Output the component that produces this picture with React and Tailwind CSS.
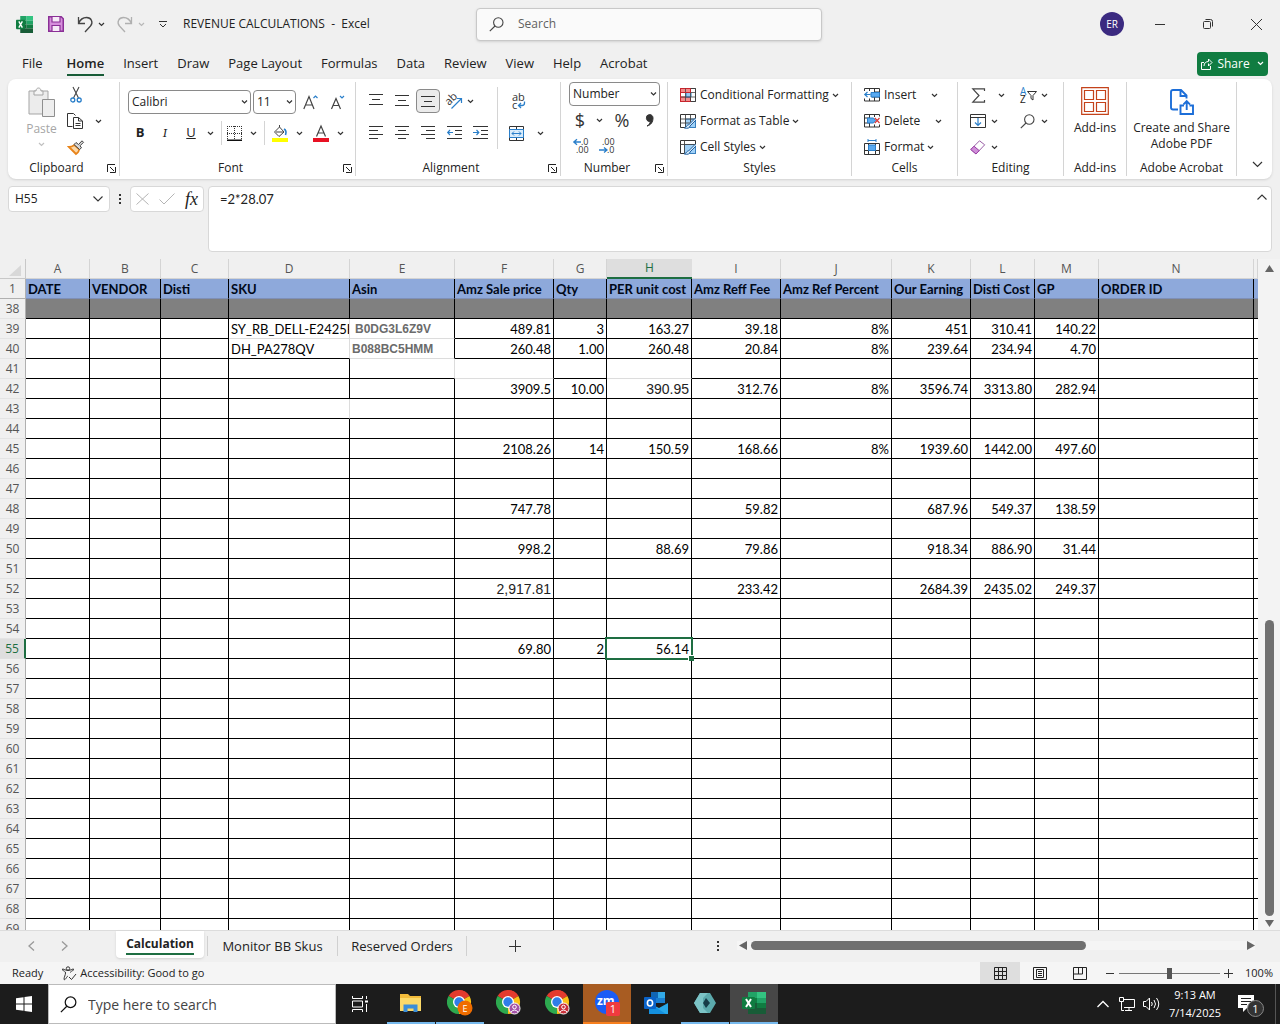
import { useState } from 'react';

const columns = [
  { id: 'A', width: 'w-[64px]', title: 'DATE' },
  { id: 'B', width: 'w-[71px]', title: 'VENDOR' },
  { id: 'C', width: 'w-[68px]', title: 'Disti' },
  { id: 'D', width: 'w-[121px]', title: 'SKU' },
  { id: 'E', width: 'w-[105px]', title: 'Asin' },
  { id: 'F', width: 'w-[99px]', title: 'Amz Sale price' },
  { id: 'G', width: 'w-[53px]', title: 'Qty' },
  { id: 'H', width: 'w-[85px]', title: 'PER unit cost' },
  { id: 'I', width: 'w-[89px]', title: 'Amz Reff Fee' },
  { id: 'J', width: 'w-[111px]', title: 'Amz Ref Percent' },
  { id: 'K', width: 'w-[79px]', title: 'Our Earning' },
  { id: 'L', width: 'w-[64px]', title: 'Disti Cost' },
  { id: 'M', width: 'w-[64px]', title: 'GP' },
  { id: 'N', width: 'w-[155px]', title: 'ORDER ID' },
  { id: '', width: '', title: '' },
];

const cells = {
  39: { D: 'SY_RB_DELL-E2425H', E: 'B0DG3L6Z9V', F: '489.81', G: '3', H: '163.27', I: '39.18', J: '8%', K: '451', L: '310.41', M: '140.22' },
  40: { D: 'DH_PA278QV', E: 'B088BC5HMM', F: '260.48', G: '1.00', H: '260.48', I: '20.84', J: '8%', K: '239.64', L: '234.94', M: '4.70' },
  42: { F: '3909.5', G: '10.00', H: '390.95', I: '312.76', J: '8%', K: '3596.74', L: '3313.80', M: '282.94' },
  45: { F: '2108.26', G: '14', H: '150.59', I: '168.66', J: '8%', K: '1939.60', L: '1442.00', M: '497.60' },
  48: { F: '747.78', I: '59.82', K: '687.96', L: '549.37', M: '138.59' },
  50: { F: '998.2', H: '88.69', I: '79.86', K: '918.34', L: '886.90', M: '31.44' },
  52: { F: '2,917.81', I: '233.42', K: '2684.39', L: '2435.02', M: '249.37' },
  55: { F: '69.80', G: '2', H: '56.14' },
};

// cells that came without borders show the plain gridline instead
const lightBottom = ['D39', 'E39', 'E40', 'F41', 'H41'];
const lightRight = ['D39', 'D40', 'D43', 'E41'];

const cellFonts = {
  E39: 'font-["Liberation_Sans"] text-[12px] font-bold text-[#6b6b6b] pl-[5px]',
  E40: 'font-["Liberation_Sans"] text-[12px] font-bold text-[#6b6b6b]',
  H42: 'font-["Liberation_Sans"] text-[14px] text-[#222]',
  F52: 'font-["Liberation_Sans"] text-[14px] text-[#222]',
};

const rowNumbers = Array.from({ length: 32 }, (_, i) => 38 + i);

const Svg = ({ w, h, children, className = '' }) => (
  <svg width={w} height={h} viewBox={`0 0 ${w} ${h}`} fill="none" stroke="#333" className={`shrink-0 overflow-visible ${className}`} aria-hidden="true">
    {children}
  </svg>
);

const Chevron = ({ color = '#333', className = '' }) => (
  <Svg w={7} h={5} className={className}>
    <path d="M1 1l2.5 2.5L6 1" stroke={color} strokeWidth="1.2" />
  </Svg>
);

const IconButton = ({ label, children, className = '' }) => (
  <button type="button" aria-label={label} className={`flex items-center justify-center ${className}`}>
    {children}
  </button>
);

const Launcher = ({ label }) => (
  <IconButton label={label} className="absolute right-[3px] bottom-[3px]">
    <Svg w={9} h={9}>
      <path d="M.5 8V.5H8M3 3l4 4M8.500 3v5.500H3" stroke="#222" />
    </Svg>
  </IconButton>
);

const Group = ({ title, className, body = '', launcher, children }) => (
  <section aria-label={title} className={`relative flex shrink-0 flex-col border-r border-[#d4d4d4] ${className}`}>
    <div className={`h-[76px] shrink-0 ${body}`}>{children}</div>
    <div className={`text-center leading-[20px] ${launcher ? 'pr-[14px]' : ''}`}>{title}</div>
    {launcher && <Launcher label={`${title} settings`} />}
  </section>
);

/* ---------- small drawings ---------- */

const ExcelLogo = ({ big }) => (
  <svg width={big ? 24 : 17} height={big ? 22 : 17} viewBox="0 0 24 22" preserveAspectRatio="none" className="shrink-0" aria-hidden="true">
    <rect x="6" y="0" width="9" height="6" fill="#21a366" />
    <rect x="15" y="0" width="9" height="6" fill="#33c481" />
    <rect x="6" y="6" width="9" height="5" fill="#107c41" />
    <rect x="15" y="6" width="9" height="5" fill="#21a366" />
    <rect x="6" y="11" width="9" height="5" fill="#185c37" />
    <rect x="15" y="11" width="9" height="5" fill="#107c41" />
    <rect x="6" y="16" width="18" height="6" fill="#185c37" />
    <rect x="0" y="5" width="13" height="12" rx="1" fill="#107c41" />
    <path d="M4 7l5 8M9 7l-5 8" stroke="#fff" strokeWidth="2" />
  </svg>
);

const SaveIcon = () => (
  <Svg w={16} h={16}>
    <path d="M.75.75h12.500l2 2v12.500H.75z" fill="#d68fdc" stroke="#8a2f96" strokeWidth="1.500" />
    <path d="M4 1v5h8V1M4 15V9.500h8V15" fill="#f7eaf8" stroke="#8a2f96" strokeWidth="1.200" />
  </Svg>
);

const UndoIcon = ({ color = '#444', flip }) => (
  <Svg w={16} h={17} className={flip ? '-scale-x-100' : ''}>
    <path d="M1.500 1v6.500H8M1.500 7.500C3 4 6 1.500 9.500 1.500c5 0 7 5 4 8.500L8 16" stroke={color} strokeWidth="1.300" />
  </Svg>
);

const SearchIcon = ({ size = 15, color = '#444' }) => (
  <svg width={size} height={size} viewBox="0 0 15 15" fill="none" stroke={color} strokeWidth="1.100" className="shrink-0" aria-hidden="true">
    <circle cx="9.300" cy="5.500" r="4.700" />
    <path d="M6 9L.8 14.200" />
  </svg>
);

const PasteIcon = () => (
  <Svg w={28} h={30}>
    <path d="M1 4h19v23H1z" fill="#ececec" stroke="#a5a5a5" />
    <path d="M6 4h2c0-4 5-4 5 0h2v4H6z" fill="#f5f5f5" stroke="#a5a5a5" />
    <path d="M14.500 12.500h12v17h-12z" fill="#eee" stroke="#8f8f8f" />
  </Svg>
);

const CutIcon = () => (
  <Svg w={12} h={16}>
    <path d="M3 0l5.500 11M9 0L3.500 11" stroke="#444" strokeWidth="1.100" />
    <circle cx="2.800" cy="13" r="2" stroke="#2a7fca" strokeWidth="1.300" />
    <circle cx="9.200" cy="13" r="2" stroke="#2a7fca" strokeWidth="1.300" />
  </Svg>
);

const CopyIcon = () => (
  <Svg w={16} h={16}>
    <path d="M5.500 13.500h-5V.5h6l2 2" />
    <path d="M6.500 4.500h5l4 3.500v7.500h-9zM11.500 4.500V8h4M8.500 10.500h5M8.500 12.500h5" fill="#fff" />
  </Svg>
);

const PainterIcon = () => (
  <Svg w={16} h={15}>
    <path d="M1 7l7 7c3-2 3-3 3-5L6.500 5C5 6 3 7 1 7z" fill="#fbd8a8" stroke="#e8841a" strokeWidth="1.800" />
    <path d="M6 4.500l2-2 2.500 2L14 .8l1.500 1.500-3.500 3.500 1.500 2-2 1.700z" fill="#d8d8d8" stroke="#444" />
  </Svg>
);

const FontSizeIcon = ({ down }) => (
  <Svg w={15} h={15}>
    {down ? (
      <path d="M1.500 14L6 3.500 10.500 14M3 10.500h6" stroke="#444" strokeWidth="1.200" />
    ) : (
      <path d="M.8 14L6 1.500 11 14M2.500 10h7" stroke="#444" strokeWidth="1.200" />
    )}
    <path d={down ? 'M10 1l2 2 2-2' : 'M10.500 3l2-2 2 2'} stroke="#2a7fca" strokeWidth="1.200" />
  </Svg>
);

const BordersIcon = () => (
  <Svg w={15} h={15}>
    <path d="M.5 0v14M7.500 0v14M14.500 0v14M0 .5h15M0 7.500h15" stroke="#333" strokeDasharray="1 1" />
    <path d="M0 14.200h15" stroke="#111" strokeWidth="1.500" />
  </Svg>
);

const FillIcon = () => (
  <Svg w={16} h={17}>
    <path d="M2.500 7L7.500 2l4.500 5-5 4.500zM7.500 2V0M4 7h8" stroke="#444" />
    <path d="M12 4c2 1 2.500 3 1.500 6" stroke="#2a7fca" strokeWidth="1.600" />
    <path d="M0 15h16" stroke="#ffff00" strokeWidth="4" />
  </Svg>
);

const FontColorIcon = () => (
  <Svg w={16} h={17}>
    <path d="M3.500 11.500L8 1l4.500 10.500M5 8h6" stroke="#444" strokeWidth="1.200" />
    <path d="M0 15h16" stroke="#e81123" strokeWidth="4" />
  </Svg>
);

const alignPaths = {
  top: 'M0 .5h14M3 5.500h8M0 10.500h14',
  middle: 'M0 1.500h14M3 6.500h8M0 11.500h14',
  bottom: 'M0 2.500h14M3 7.500h8M0 12.500h14',
  left: 'M0 .5h14M0 4.500h9M0 8.500h14M0 12.500h9',
  center: 'M0 .5h14M3 4.500h8M0 8.500h14M3 12.500h8',
  right: 'M0 .5h14M5 4.500h9M0 8.500h14M5 12.500h9',
};

const AlignIcon = ({ kind }) => (
  <Svg w={14} h={14}>
    <path d={alignPaths[kind]} />
  </Svg>
);

const IndentIcon = ({ inward }) => (
  <Svg w={15} h={14}>
    <path d="M0 .5h15M8 4.500h7M8 8.500h7M0 12.500h15" />
    <path d={inward ? 'M0 6.500h5.500M3.500 4l2.300 2.500L3.500 9' : 'M6 6.500H.7M3 4L.7 6.500 3 9'} stroke="#2a7fca" strokeWidth="1.200" />
  </Svg>
);

const OrientationIcon = () => (
  <Svg w={17} h={15}>
    <text x="0" y="9" transform="rotate(-45 5 7)" fontSize="11" fill="#333" stroke="none">ab</text>
    <path d="M5.500 14.500L15.500 4.500M11 4.500h4.500V9" stroke="#2a7fca" strokeWidth="1.200" />
  </Svg>
);

const WrapIcon = () => (
  <Svg w={15} h={17}>
    <text x="1" y="8" fontSize="11" fill="#333" stroke="none">ab</text>
    <text x="1" y="16" fontSize="11" fill="#333" stroke="none">c</text>
    <path d="M13.500 8.500v1.500q0 2.500-2.500 2.500H7.500M10 10l-2.500 2.500L10 15" stroke="#2a7fca" strokeWidth="1.300" />
  </Svg>
);

const MergeIcon = () => (
  <Svg w={15} h={15}>
    <path d="M.5.5h14v14H.5zM.5 3.500h14M.5 11.500h14M7.500.5v3M7.500 11.500v3" />
    <path d="M.5 3.500h14v8H.5z" fill="#d9ecfb" stroke="#2a7fca" />
    <path d="M3 7.500h9M5 5.500l-2 2 2 2M10 5.500l2 2-2 2" stroke="#2a7fca" />
  </Svg>
);

const DecimalIcon = ({ less }) => (
  <Svg w={17} h={16}>
    <g stroke="none" fill="#333" fontSize="9">
      <text x={less ? 3 : 8} y="7">{less ? '.00' : '.0'}</text>
      <text x={less ? 8 : 3} y="15">{less ? '.0' : '.00'}</text>
    </g>
    <path d={less ? 'M0 12h8M5 9.500L8 12l-3 2.500' : 'M8 4H.8M4 1.200L.8 4 4 6.800'} stroke="#2a7fca" strokeWidth="1.300" />
  </Svg>
);

const ConditionalIcon = () => (
  <Svg w={16} h={15}>
    <path d="M.5.5h15v13H.5z" fill="#fff" />
    <path d="M.5.5h10v4H.5zM.5 9h10v4.500H.5z" fill="#f58b8b" stroke="#c8242c" />
    <path d="M6 4.500h5V9H6z" fill="#9cc8f0" stroke="#2a7fca" />
    <path d="M5.500.5v13M10.500.5v13M15.500.5v13M.5 4.500h15M.5 9h15M10.500.5h5M10.500 13.500h5" stroke="#444" strokeWidth=".8" />
    <path d="M.5.5v13h10M10.500.5v4H.5" stroke="#c8242c" />
  </Svg>
);

const TableStyleIcon = ({ solid }) => (
  <Svg w={16} h={15}>
    <path d="M.5.5h15v13H.5z" fill="#fff" />
    <path d={solid ? 'M4.500 4.500h11v9h-11z' : 'M5.500 5h10v8.500h-10z'} fill="#9fd0f7" stroke="#2a7fca" strokeWidth=".8" />
    <path d={solid ? 'M.5 4.500h15M4.500.5v13' : 'M.5 5h15M.5 9h10M5.500.5v13M10.500.5v8'} stroke="#444" strokeWidth=".9" />
    <path d="M15.500 4L8.500 11c-2 0-2 2-4 3 3 .8 5.500 0 5.500-2l6-6" fill="#d9ecfb" stroke="#1f5f9e" />
  </Svg>
);

const CellsIcon = ({ kind }) => (
  <Svg w={16} h={16}>
    {kind === 'insert' && (
      <>
        <path d="M.5 4V1.500h15v12.500H.5v-2.500M5.500 1.500V4M10.500 1.500v12.500M5.500 11.500V14M11 5h4.500M8 10h7.500" />
        <path d="M7 5.500h8.500v4.500H7z" fill="#5aaaf0" stroke="#2a7fca" />
        <path d="M6.500 7.500H.8M3.500 5L.8 7.500 3.500 10" stroke="#2a7fca" strokeWidth="1.200" />
      </>
    )}
    {kind === 'delete' && (
      <>
        <path d="M15.500 3.500v-2H.5V14h15v-2.500M5.500 1.500v12.500M10.500 1.500V4M10.500 11.500V14M.5 5h5M.5 10h5" />
        <path d="M3.500 5h6l2 2.500-2 2.500h-6z" fill="#5aaaf0" stroke="#2a7fca" />
        <path d="M10.800 5l4.700 5M15.500 5l-4.700 5" stroke="#d8383a" strokeWidth="1.200" />
      </>
    )}
    {kind === 'format' && (
      <>
        <path d="M.5 4.500h15v11H.5zM4.500 4.500v11M11.500 4.500v11M.5 11.500h15" />
        <path d="M4.500 6h7v5.500h-7z" fill="#5aaaf0" stroke="#2a7fca" />
        <path d="M4 1.500h8M4 0v3M12 0v3" stroke="#2a7fca" />
      </>
    )}
  </Svg>
);

const SumIcon = () => (
  <Svg w={13} h={15}>
    <path d="M12.500 3V.8H.8L7 7.500.8 14.200h11.700V12" stroke="#444" strokeWidth="1.200" />
  </Svg>
);

const SortIcon = () => (
  <Svg w={17} h={17}>
    <text x="0" y="8" fontSize="10" fill="#2a7fca" stroke="none">A</text>
    <text x="0" y="16" fontSize="10" fill="#222" stroke="none">Z</text>
    <path d="M7.500 4.500h9l-3.500 4v4.500l-2-1.500v-3z" stroke="#333" />
  </Svg>
);

const FillDownIcon = () => (
  <Svg w={16} h={14}>
    <path d="M.5.5h15v13H.5zM.5 3.500h15" />
    <path d="M8 4v7.500M5 8.500l3 3 3-3" stroke="#2a7fca" strokeWidth="1.200" />
  </Svg>
);

const EraserIcon = () => (
  <Svg w={16} h={15}>
    <path d="M.8 9.500L9.500.8l5.200 4L6 14z" fill="#fff" stroke="#9a5fa6" />
    <path d="M.8 9.500L4 6.200l5.200 4.400L6 14z" fill="#cf8fd8" stroke="#9a3fa6" />
  </Svg>
);

const AddInsIcon = () => (
  <Svg w={28} h={28}>
    <path d="M.7.7h26.600v26.600H.7zM3.500 3.500h9v9h-9zM15.500 3.500h9v9h-9zM3.500 15.500h9v9h-9zM15.500 15.500h9v9h-9z" stroke="#c4421a" strokeWidth="1.200" />
  </Svg>
);

const PdfIcon = () => (
  <Svg w={24} h={26}>
    <path d="M8 20.500H3q-2 0-2-2V3q0-2 2-2h8l5.500 5.500v3M10.500 1v6h6M14 16.500h-3.500V25h12.500v-8.500h-3.500M16.700 21v-8.500M13.500 15.300l3.200-3.200 3.200 3.200" stroke="#1c6ed8" strokeWidth="1.900" />
  </Svg>
);

/* ---------- title bar + tabs ---------- */

const TitleBar = () => (
  <header className="flex h-[48px] shrink-0 items-center">
    <div className="flex min-w-0 flex-1 items-center pl-4">
      <ExcelLogo />
      <IconButton label="Save" className="ml-[15px]"><SaveIcon /></IconButton>
      <IconButton label="Undo" className="ml-[13px] gap-[5px]"><UndoIcon /><Chevron /></IconButton>
      <IconButton label="Redo" className="ml-[12px] gap-[5px]"><UndoIcon color="#b0b0b0" flip /><Chevron color="#b8b8b8" /></IconButton>
      <IconButton label="Customize Quick Access Toolbar" className="ml-[14px]">
        <Svg w={8} h={7}><path d="M0 .5h8M1 3l3 3 3-3" /></Svg>
      </IconButton>
      <h1 className="ml-4 whitespace-pre">REVENUE CALCULATIONS  -  Excel</h1>
    </div>
    <label className="ml-[18px] flex h-[33px] w-[346px] items-center gap-[14px] rounded border border-[#c8c8c8] bg-[#fafafa] px-3 shadow-sm">
      <SearchIcon />
      <input type="search" aria-label="Search" placeholder="Search" className="min-w-0 flex-1 bg-transparent outline-none placeholder:text-[#616161]" />
    </label>
    <div className="flex h-full flex-1 items-center justify-end pl-4">
      <IconButton label="Account ER" className="mr-3 h-[24px] w-[24px] rounded-full bg-[#3b2a80] text-[10px] text-white">ER</IconButton>
      <IconButton label="Minimize" className="h-full w-[48px]">
        <Svg w={10} h={10}><path d="M0 5.500h10" /></Svg>
      </IconButton>
      <IconButton label="Restore" className="h-full w-[48px]">
        <Svg w={10} h={10}>
          <rect x=".5" y="2.500" width="7" height="7" rx="1" />
          <path d="M2.500.5h5q2 0 2 2v5" />
        </Svg>
      </IconButton>
      <IconButton label="Close" className="h-full w-[48px]">
        <Svg w={11} h={11}><path d="M0 0l11 11M11 0L0 11" /></Svg>
      </IconButton>
    </div>
  </header>
);

const ribbonTabs = ['File', 'Home', 'Insert', 'Draw', 'Page Layout', 'Formulas', 'Data', 'Review', 'View', 'Help', 'Acrobat'];

const RibbonTabs = () => (
  <nav className="flex h-[31px] shrink-0 items-center justify-between pr-3 pl-[22px]">
    <div className="flex h-full gap-[19px] text-[13px]">
      {ribbonTabs.map((tab) => (
        <button
          key={tab}
          type="button"
          className={tab === 'Home' ? 'h-[28px] border-b-2 border-[#185c37] pt-[5px] font-semibold' : 'h-[28px] pt-[3px] first:mr-[5px]'}
        >
          {tab}
        </button>
      ))}
    </div>
    <button type="button" className="flex h-[24px] w-[71px] items-center justify-center gap-1 rounded bg-[#107c41] text-white">
      <Svg w={12} h={12}>
        <path d="M3 4.500H.5v7h9V8M3 8c0-3 2-4.500 4.500-4.500V1L11 4.500 7.500 8V5.500" stroke="#fff" />
      </Svg>
      Share
      <Chevron color="#fff" className="ml-[3px]" />
    </button>
  </nav>
);

/* ---------- ribbon ---------- */

const Picker = ({ label, value, className }) => (
  <div className={`relative shrink-0 ${className}`}>
    <select aria-label={label} defaultValue={value} className="h-full w-full appearance-none rounded border border-[#8a8a8a] bg-white pl-[3px]">
      <option>{value}</option>
    </select>
    <Chevron className="pointer-events-none absolute top-1/2 right-[3px] -translate-y-1/2" />
  </div>
);

const MenuRow = ({ icon, label, spread }) => (
  <button type="button" className="flex h-[26px] items-center">
    {icon}
    <span className="ml-1">{label}</span>
    <Chevron className={spread ? 'ml-[15px]' : 'ml-[3px]'} />
  </button>
);

const ClipboardGroup = () => (
  <Group title="Clipboard" className="w-[112px]" launcher>
    <div className="flex">
      <button type="button" className="flex w-[59px] flex-col items-center pt-[5px] pl-[8px] text-[#a6a6a6]">
        <PasteIcon />
        <span className="mt-[3px]">Paste</span>
        <Chevron color="#c0c0c0" className="mt-1" />
      </button>
      <div className="flex flex-col">
        <IconButton label="Cut" className="h-[26px] w-[18px]"><CutIcon /></IconButton>
        <IconButton label="Copy" className="h-[26px] gap-3"><CopyIcon /><Chevron /></IconButton>
        <IconButton label="Format Painter" className="h-[26px] w-[18px]"><PainterIcon /></IconButton>
      </div>
    </div>
  </Group>
);

const FontGroup = () => (
  <Group title="Font" className="w-[236px]" body="pl-2" launcher>
    <div className="flex items-center pt-2">
      <Picker label="Font" value="Calibri" className="h-[24px] w-[123px]" />
      <Picker label="Font size" value="11" className="ml-[2px] h-[24px] w-[43px]" />
      <IconButton label="Increase font size" className="ml-[7px]"><FontSizeIcon /></IconButton>
      <IconButton label="Decrease font size" className="ml-3"><FontSizeIcon down /></IconButton>
    </div>
    <div className="mt-[7px] flex h-[24px] items-center text-[13px]">
      <button type="button" className="w-[24px] font-bold">B</button>
      <button type="button" className="w-[26px] font-serif italic">I</button>
      <button type="button" className="w-[26px] underline">U</button>
      <IconButton label="Underline styles" className="w-[12px]"><Chevron /></IconButton>
      <span className="mx-[5px] h-[24px] w-px bg-[#d4d4d4]" />
      <IconButton label="Borders" className="gap-2"><BordersIcon /><Chevron /></IconButton>
      <span className="mx-[7px] h-[24px] w-px bg-[#d4d4d4]" />
      <IconButton label="Fill color" className="gap-2"><FillIcon /><Chevron /></IconButton>
      <IconButton label="Font color" className="ml-[10px] gap-2"><FontColorIcon /><Chevron /></IconButton>
    </div>
  </Group>
);

const AlignmentGroup = () => (
  <Group title="Alignment" className="w-[205px]" launcher>
    <div className="flex pt-[5px]">
      <div className="ml-[7px] grid shrink-0 grid-cols-[repeat(4,26px)_30px]">
        <IconButton label="Top align" className="h-[28px]"><AlignIcon kind="top" /></IconButton>
        <IconButton label="Middle align" className="h-[28px]"><AlignIcon kind="middle" /></IconButton>
        <IconButton label="Bottom align" className="h-[24px] w-[24px] self-center justify-self-center rounded border border-[#8a8a8a] bg-[#ebebeb]"><AlignIcon kind="bottom" /></IconButton>
        <IconButton label="Orientation" className="col-span-2 h-[28px] justify-start gap-1 pl-[5px]"><OrientationIcon /><Chevron /></IconButton>
        <IconButton label="Align left" className="h-[36px]"><AlignIcon kind="left" /></IconButton>
        <IconButton label="Center" className="h-[36px]"><AlignIcon kind="center" /></IconButton>
        <IconButton label="Align right" className="h-[36px]"><AlignIcon kind="right" /></IconButton>
        <IconButton label="Decrease indent" className="h-[36px]"><IndentIcon /></IconButton>
        <IconButton label="Increase indent" className="h-[36px] w-[26px]"><IndentIcon inward /></IconButton>
      </div>
      <span className="h-[62px] w-px bg-[#d4d4d4]" />
      <div className="ml-[11px] flex flex-col">
        <IconButton label="Wrap text" className="h-[28px] w-[18px]"><WrapIcon /></IconButton>
        <IconButton label="Merge and center" className="h-[36px] gap-[13px]"><MergeIcon /><Chevron /></IconButton>
      </div>
    </div>
  </Group>
);

const NumberGroup = () => (
  <Group title="Number" className="w-[107px]" body="pl-2" launcher>
    <Picker label="Number format" value="Number" className="h-[24px] w-[91px]" />
    <div className="flex h-[28px] items-center text-[18px] text-[#333]">
      <IconButton label="Accounting format" className="w-[22px]">$</IconButton>
      <Chevron className="mx-[5px]" />
      <button type="button" aria-label="Percent style" className="w-[28px] text-center">%</button>
      <IconButton label="Comma style" className="w-[26px]">
        <Svg w={9} h={13}>
          <path d="M4.500.5a3.500 3.500 0 1 0 .8 7C5 9.500 4 11 2 12c4-1 6-4 6-8 0-2-1.500-3.500-3.500-3.500z" fill="#333" />
        </Svg>
      </IconButton>
    </div>
    <div className="flex h-[24px] items-center gap-[9px] pl-1">
      <IconButton label="Increase decimal"><DecimalIcon /></IconButton>
      <IconButton label="Decrease decimal"><DecimalIcon less /></IconButton>
    </div>
  </Group>
);

const Ribbon = () => (
  <div className="mx-2 flex h-[100px] shrink-0 overflow-hidden rounded-lg bg-white py-[3px] shadow">
    <ClipboardGroup />
    <FontGroup />
    <AlignmentGroup />
    <NumberGroup />
    <Group title="Styles" className="w-[184px]" body="pl-3">
      <MenuRow icon={<ConditionalIcon />} label="Conditional Formatting" />
      <MenuRow icon={<TableStyleIcon />} label="Format as Table" />
      <MenuRow icon={<TableStyleIcon solid />} label="Cell Styles" />
    </Group>
    <Group title="Cells" className="w-[106px]" body="pl-3">
      <MenuRow icon={<CellsIcon kind="insert" />} label="Insert" spread />
      <MenuRow icon={<CellsIcon kind="delete" />} label="Delete" spread />
      <MenuRow icon={<CellsIcon kind="format" />} label="Format" />
    </Group>
    <Group title="Editing" className="w-[106px]" body="pl-3">
      <div className="grid grid-cols-[50px_40px]">
        <IconButton label="AutoSum" className="h-[26px] justify-start gap-[13px] pl-[2px]"><SumIcon /><Chevron /></IconButton>
        <IconButton label="Sort and filter" className="h-[26px] justify-start gap-1"><SortIcon /><Chevron /></IconButton>
        <IconButton label="Fill" className="h-[26px] justify-start gap-[5px]"><FillDownIcon /><Chevron /></IconButton>
        <IconButton label="Find and select" className="h-[26px] justify-start gap-[6px]"><SearchIcon /><Chevron /></IconButton>
        <IconButton label="Clear" className="h-[26px] justify-start gap-[5px]"><EraserIcon /><Chevron /></IconButton>
      </div>
    </Group>
    <Group title="Add-ins" className="w-[63px]">
      <button type="button" className="flex w-full flex-col items-center gap-[5px] pt-[5px] leading-4">
        <AddInsIcon />
        Add-ins
      </button>
    </Group>
    <Group title="Adobe Acrobat" className="w-[110px]">
      <button type="button" className="flex w-full flex-col items-center gap-[5px] pt-[7px] leading-4">
        <PdfIcon />
        <span className="whitespace-nowrap">Create and Share<br />Adobe PDF</span>
      </button>
    </Group>
    <div className="flex flex-1 items-end justify-end pr-[9px] pb-[8px]">
      <IconButton label="Collapse ribbon">
        <Svg w={11} h={7}><path d="M1 1l4.500 4.500L10 1" strokeWidth="1.200" /></Svg>
      </IconButton>
    </div>
  </div>
);

const FormulaBar = () => {
  const [formula, setFormula] = useState('=2*28.07');

  return (
    <div className="mt-[7px] flex shrink-0 items-start px-2">
      <div className="flex h-[26px] w-[102px] items-center rounded border border-[#d8d8d8] bg-white px-[6px]">
        <input aria-label="Name box" defaultValue="H55" className="w-0 min-w-0 flex-1 bg-transparent outline-none" />
        <Svg w={10} h={6}><path d="M.5.500L5 5 9.500.500" strokeWidth="1.100" /></Svg>
      </div>
      <Svg w={20} h={26}>
        <path d="M9 8h2v2H9zM9 12h2v2H9zM9 16h2v2H9z" fill="#333" stroke="none" />
      </Svg>
      <div className="flex h-[26px] w-[74px] items-center justify-between rounded border border-[#d8d8d8] bg-white px-[5px]">
        <IconButton label="Cancel"><Svg w={13} h={12}><path d="M.5.5l12 11M12.500.5L.5 11.500" stroke="#b5b5b5" /></Svg></IconButton>
        <IconButton label="Enter"><Svg w={16} h={12}><path d="M.5 6.500l4.500 4.500L15.500.5" stroke="#b5b5b5" /></Svg></IconButton>
        <button type="button" aria-label="Insert function" className='font-["Liberation_Serif"] text-[18px] leading-none italic'>fx</button>
      </div>
      <div className="ml-1 flex h-[66px] flex-1 items-start rounded border border-[#d8d8d8] bg-white pt-[3px] pr-1 pl-[11px]">
        <textarea
          aria-label="Formula"
          value={formula}
          onChange={(e) => setFormula(e.target.value)}
          className='h-[56px] flex-1 resize-none bg-transparent font-[Lato] text-[13px] leading-[18px] outline-none'
        />
        <IconButton label="Collapse formula bar" className="pt-1">
          <Svg w={10} h={6}><path d="M.5 5.500L5 1l4.500 4.500" strokeWidth="1.100" /></Svg>
        </IconButton>
      </div>
    </div>
  );
};

/* ---------- sheet ---------- */

const SheetCell = ({ row, col }) => {
  const ref = `${col}${row}`;
  const value = cells[row]?.[col];
  const selected = ref === 'H55';
  const bottom = lightBottom.includes(ref) ? 'border-b-[#dcdcdc]' : 'border-b-black';
  const right = lightRight.includes(ref) ? 'border-r-[#dcdcdc]' : 'border-r-black';
  const align = col === 'D' || col === 'E' ? 'text-left' : 'text-right';

  return (
    <td className={`h-[20px] border-r border-b px-[2px] last:border-r-0 ${bottom} ${right} ${align} ${row === 38 ? 'bg-[#808080]' : 'bg-white'} ${selected ? 'relative' : 'overflow-hidden'} ${cellFonts[ref] || ''}`}>
      {value}
      {selected && (
        <span className="absolute -inset-[2px] border-2 border-[#1e6e42]">
          <span className="absolute -right-[3px] -bottom-[3px] h-[6px] w-[6px] border-t border-l border-white bg-[#1e6e42]" />
        </span>
      )}
    </td>
  );
};

const Sheet = () => (
  <main className="mt-[7px] flex min-h-0 flex-1">
    <div className="min-w-0 flex-1 overflow-hidden">
      <table className='w-full table-fixed border-separate border-spacing-0 font-[Lato] text-[13px] leading-[18px] whitespace-nowrap text-black'>
        <thead>
          <tr className='font-["Open_Sans"] text-[12px] text-[#555]'>
            <td className="h-[20px] w-[26px] border-r border-b border-[#c8c8c8]">
              <Svg w={22} h={17}><path d="M21 5v11H9z" fill="#d8d8d8" stroke="none" /></Svg>
            </td>
            {columns.map((c) => (
              <th
                key={c.id}
                scope="col"
                className={`h-[20px] p-0 font-normal ${c.width} ${c.id === 'H' ? 'border-b-2 border-[#1e6e42] bg-[#dedede] text-[#1e6e42]' : 'border-r border-b border-[#d4d4d4]'}`}
              >
                {c.id}
              </th>
            ))}
          </tr>
        </thead>
        <tbody>
          <tr>
            <th scope="row" className='h-[20px] border-r border-b border-[#b0b0b0] p-0 font-["Open_Sans"] text-[12px] font-normal text-[#555]'>1</th>
            {columns.map((c) => (
              <td key={c.id} className="h-[20px] border-r border-b border-r-black border-b-[#7f90b8] bg-[#8ea9db] px-[2px] font-bold text-[#000818] last:border-r-0">
                {c.title}
              </td>
            ))}
          </tr>
          {rowNumbers.map((row) => (
            <tr key={row}>
              <th
                scope="row"
                className={`h-[20px] p-0 font-["Open_Sans"] text-[12px] font-normal ${row === 55 ? 'border-r-2 border-b border-r-[#1e6e42] border-b-[#e0e0e0] bg-[#dedede] text-[#1e6e42]' : 'border-r border-b border-r-[#b0b0b0] border-b-[#e4e4e4] text-[#555]'}`}
              >
                {row}
              </th>
              {columns.map((c) => <SheetCell key={c.id} row={row} col={c.id} />)}
            </tr>
          ))}
        </tbody>
      </table>
    </div>
    <div className="flex w-[22px] flex-col items-center bg-[#f3f3f3] pt-1 pb-[3px]">
      <IconButton label="Scroll up" className="h-[10px]"><Svg w={9} h={7}><path d="M4.500 0L9 7H0z" fill="#666" stroke="none" /></Svg></IconButton>
      <div className="mb-1 flex w-[9px] flex-1 items-end">
        <div className="h-[46%] w-full rounded-full bg-[#707070]" />
      </div>
      <IconButton label="Scroll down" className="h-[7px]"><Svg w={9} h={7}><path d="M4.500 7L9 0H0z" fill="#666" stroke="none" /></Svg></IconButton>
    </div>
  </main>
);

const SheetTabs = () => (
  <div className="flex h-[32px] shrink-0 items-center border-t border-[#dcdcdc] pb-[2px] text-[13px]">
    <IconButton label="Previous sheet" className="ml-7"><Svg w={7} h={10}><path d="M6 .5L1 5l5 4.500" stroke="#999" strokeWidth="1.300" /></Svg></IconButton>
    <IconButton label="Next sheet" className="ml-[26px]"><Svg w={7} h={10}><path d="M1 .5L6 5 1 9.500" stroke="#999" strokeWidth="1.300" /></Svg></IconButton>
    <button type="button" className="ml-12 h-[27px] w-[88px] self-start rounded-b bg-white pb-[2px] text-[12px] font-bold text-[#222] shadow-sm">
      <span className="border-b-2 border-[#1e6e42] pb-[1px]">Calculation</span>
    </button>
    <button type="button" className="ml-[3px] h-[20px] w-[131px] border-x border-[#d0d0d0] leading-[18px]">Monitor BB Skus</button>
    <button type="button" className="h-[20px] w-[129px] border-r border-[#d0d0d0] leading-[18px]">Reserved Orders</button>
    <IconButton label="New sheet" className="ml-[42px]"><Svg w={12} h={12}><path d="M6.500 0v12M0 6.500h12" /></Svg></IconButton>
    <Svg w={4} h={14} className="ml-auto"><path d="M1 2h2v2H1zM1 6h2v2H1zM1 10h2v2H1z" fill="#333" stroke="none" /></Svg>
    <div className="mr-[25px] ml-[17px] flex w-[518px] items-center gap-1 bg-[#f5f5f5]">
      <IconButton label="Scroll left" className="ml-[2px]"><Svg w={8} h={9}><path d="M8 0v9L0 4.500z" fill="#666" stroke="none" /></Svg></IconButton>
      <div className="flex-1"><div className="h-[9px] w-[68%] rounded-full bg-[#707070]" /></div>
      <IconButton label="Scroll right"><Svg w={8} h={9}><path d="M0 0v9l8-4.500z" fill="#666" stroke="none" /></Svg></IconButton>
    </div>
  </div>
);

const StatusBar = () => (
  <div className="flex h-[22px] shrink-0 items-center bg-[#f5f5f5] pl-3 text-[11px]">
    <span>Ready</span>
    <button type="button" className="ml-[18px] flex items-center gap-[3px]">
      <Svg w={16} h={15}>
        <circle cx="7" cy="2.500" r="1.700" />
        <path d="M1 3.500c2 2 3.500 1.500 3.500 3.500S3 11 3 13.500c1.500 1 2.500-3 4-3.500M13 3.500c-2 2-3.500 1.500-3.500 3M1 3.500c1-1.500 3 1 6 1s5-2.500 6-1M8 11l2.500 2.500L15 8" />
      </Svg>
      Accessibility: Good to go
    </button>
    <IconButton label="Normal view" className="ml-auto h-full w-[40px] bg-[#dedede]">
      <Svg w={13} h={13}><path d="M.5.5h12v12H.5zM4.500.5v12M8.500.5v12M.5 4.500h12M.5 8.500h12" stroke="#222" /></Svg>
    </IconButton>
    <IconButton label="Page layout view" className="h-full w-[40px]">
      <Svg w={14} h={13}><path d="M.5.5h13v12H.5zM3.500 2.500h7v8h-7zM5 4.500h4M5 6.500h4M5 8.500h4" stroke="#222" /></Svg>
    </IconButton>
    <IconButton label="Page break preview" className="h-full w-[40px]">
      <Svg w={14} h={13}><path d="M.5.5h13v12H.5zM5.500.5v6.500M9.500.5V7H.5" stroke="#222" /></Svg>
    </IconButton>
    <button type="button" aria-label="Zoom out" className="ml-[6px]"><Svg w={9} h={9}><path d="M0 4.500h8" /></Svg></button>
    <input
      type="range"
      aria-label="Zoom"
      min="0"
      max="100"
      defaultValue="50"
      className="mx-1 h-[12px] w-[101px] appearance-none bg-[linear-gradient(#777,#777)] bg-[length:100%_1px] bg-center bg-no-repeat [&::-webkit-slider-thumb]:h-[11px] [&::-webkit-slider-thumb]:w-[5px] [&::-webkit-slider-thumb]:appearance-none [&::-webkit-slider-thumb]:bg-[#555]"
    />
    <button type="button" aria-label="Zoom in"><Svg w={9} h={9}><path d="M0 4.500h9M4.500 0v9" /></Svg></button>
    <button type="button" className="mr-[7px] ml-3 w-[28px] text-right">100%</button>
  </div>
);

/* ---------- taskbar ---------- */

const ChromeIcon = ({ badge }) => (
  <svg width="26" height="26" viewBox="0 0 26 26" aria-hidden="true">
    <path d="M12 12L1.600 6A12 12 0 0 1 22.400 6z" fill="#e33b2e" />
    <path d="M12 12V0a12 12 0 0 1 10.400 6H12z" fill="#e33b2e" />
    <path d="M12 12l10.400-6A12 12 0 0 1 12 24z" fill="#fbc116" />
    <path d="M12 12v12A12 12 0 0 1 1.600 6z" fill="#2da94f" />
    <circle cx="12" cy="12" r="6" fill="#fff" />
    <circle cx="12" cy="12" r="4.700" fill="#2f7de9" />
    {badge === 'E' ? (
      <>
        <circle cx="18" cy="18" r="7.500" fill="#ef6c00" />
        <text x="18" y="21.500" textAnchor="middle" fontSize="9" fill="#fff">E</text>
      </>
    ) : (
      <>
        <circle cx="18.500" cy="18.500" r="5.500" fill={badge} stroke="#fff" />
        <circle cx="18.500" cy="17" r="1.800" fill="none" stroke="#fff" />
        <path d="M15 22q3.500-4 7 0" fill="none" stroke="#fff" />
      </>
    )}
  </svg>
);

const TaskButton = ({ label, open, className = '', children }) => (
  <button type="button" aria-label={label} className={`flex h-full w-[48px] items-center justify-center border-b-2 ${open ? 'border-[#76b9ed]' : 'border-transparent'} ${className}`}>
    {children}
  </button>
);

const Taskbar = () => (
  <footer className="flex h-[40px] shrink-0 items-center bg-[#1c1c1c] text-white">
    <IconButton label="Start" className="h-full w-[48px]">
      <Svg w={16} h={16}>
        <path d="M0 2.300L7.500 1.200v6.300H0zM8.500 1L16 0v7.500H8.500zM0 8.500h7.500v6.300L0 13.700zM8.500 8.500H16V16l-7.500-1z" fill="#fff" stroke="none" />
      </Svg>
    </IconButton>
    <label className="flex h-full w-[288px] items-center gap-[11px] border border-[#bbb] bg-white px-[11px]">
      <SearchIcon size={17} color="#111" />
      <input type="search" aria-label="Type here to search" placeholder="Type here to search" className="min-w-0 flex-1 text-[14px] outline-none placeholder:text-[#444]" />
    </label>
    <IconButton label="Task view" className="mr-[3px] h-full w-[48px]">
      <Svg w={16} h={16}>
        <path d="M.5 0v2.500h10V0M.5 5h10v6H.5zM.5 16v-2.500h10V16M14.500 0v3M14.500 8v8" stroke="#fff" />
        <path d="M13 4.500h3v2h-3z" fill="#fff" stroke="none" />
      </Svg>
    </IconButton>
    <div className="flex h-full gap-px">
      <TaskButton label="File Explorer" open>
        <Svg w={22} h={20}>
          <path d="M0 1h8l2 2h11v15H0z" fill="#f2bb3a" stroke="none" />
          <path d="M0 5h21v13H0z" fill="#fbd968" stroke="none" />
          <path d="M3.500 19v-7.500h14V19h-4v-3.500h-6V19z" fill="#3b8ed8" stroke="none" />
        </Svg>
      </TaskButton>
      <TaskButton label="Chrome E" open><ChromeIcon badge="E" /></TaskButton>
      <TaskButton label="Chrome"><ChromeIcon badge="#a452a8" /></TaskButton>
      <TaskButton label="Chrome"><ChromeIcon badge="#c9303a" /></TaskButton>
      <button type="button" aria-label="Zoom" className="flex h-full w-[48px] items-center justify-center border-b-2 border-[#f77f1e] bg-[#a85c22]">
        <Svg w={26} h={26}>
          <circle cx="13" cy="12" r="12" fill="#1a5cf5" stroke="none" />
          <text x="3" y="15" fontSize="12" fontWeight="700" fill="#fff" stroke="none">zm</text>
          <rect x="12" y="12" width="14" height="14" rx="2" fill="#f03a3e" stroke="none" />
          <text x="19" y="23" textAnchor="middle" fontSize="11" fill="#fff" stroke="none">1</text>
        </Svg>
      </button>
      <TaskButton label="Outlook">
        <Svg w={24} h={22}>
          <path d="M7 0h14v11H7z" fill="#1066b5" stroke="none" />
          <path d="M14 0h7v6h-7z" fill="#32a9e7" stroke="none" />
          <path d="M7 6h7v5H7zM14 6h7v5h-7z" fill="#1b7fd0" stroke="none" />
          <path d="M5 11l10 5 9-5v11H5z" fill="#28a8ea" stroke="none" />
          <path d="M5 11l17 11H5z" fill="#1490df" stroke="none" />
          <rect x="0" y="5" width="12" height="12" rx="1" fill="#0a63c9" stroke="none" />
          <ellipse cx="6" cy="11" rx="2.600" ry="3" stroke="#fff" strokeWidth="1.600" />
        </Svg>
      </TaskButton>
      <TaskButton label="Hexnode" open>
        <Svg w={22} h={20}>
          <path d="M6 0h10l6 10-6 10H6L0 10z" fill="#5ba9ac" stroke="none" />
          <path d="M6 0h8l-5 5v10l5 5H6L0 10z" fill="#7cc3c6" stroke="none" />
          <path d="M12 5l4 5-4 5-3-5z" fill="#163c48" stroke="none" />
        </Svg>
      </TaskButton>
      <TaskButton label="Excel" open className="bg-[#474747]"><ExcelLogo big /></TaskButton>
    </div>
    <div className="ml-auto flex h-full items-center">
      <IconButton label="Hidden icons"><Svg w={12} h={8}><path d="M.5 7L6 1.500 11.500 7" stroke="#fff" strokeWidth="1.300" /></Svg></IconButton>
      <IconButton label="Network" className="ml-[10px]">
        <Svg w={16} h={14}><path d="M5 2.500h10.500v8H5M10 10.500v3M6 13.500h7M.5.5h4v4h-4zM2.500 4.500v9H5" stroke="#fff" /></Svg>
      </IconButton>
      <IconButton label="Volume" className="ml-2">
        <Svg w={17} h={14}><path d="M.5 4.500h2.500L6.500 1v12L3 9.500H.5zM8.500 5q1.500 2 0 4M11 3q3 4 0 8M13.500 1q4.500 6 0 12" stroke="#fff" /></Svg>
      </IconButton>
      <div className="ml-2 w-[54px] text-center text-[11px] leading-[18px] whitespace-nowrap">9:13 AM<br />7/14/2025</div>
      <button type="button" aria-label="1 notification" className="relative ml-[16px] h-[26px] w-[26px]">
        <Svg w={16} h={17} className="absolute top-1 left-0">
          <path d="M0 0h16v13H9l-4 4v-4H0z" fill="#fff" stroke="none" />
          <path d="M3 3.500h10M3 6.500h10M3 9.500h6" stroke="#222" />
        </Svg>
        <span className="absolute right-0 bottom-0 h-[17px] w-[17px] rounded-full border border-[#888] bg-[#333] text-center text-[11px] leading-[15px]">1</span>
      </button>
      <span className="mr-1 ml-[11px] h-full w-px bg-[#555]" />
    </div>
  </footer>
);

const App = () => (
  <div className='flex h-screen flex-col overflow-hidden bg-[#f0f0f0] font-["Open_Sans",sans-serif] text-[12px] text-[#222]'>
    <TitleBar />
    <RibbonTabs />
    <Ribbon />
    <FormulaBar />
    <Sheet />
    <SheetTabs />
    <StatusBar />
    <Taskbar />
  </div>
);

export default App;
